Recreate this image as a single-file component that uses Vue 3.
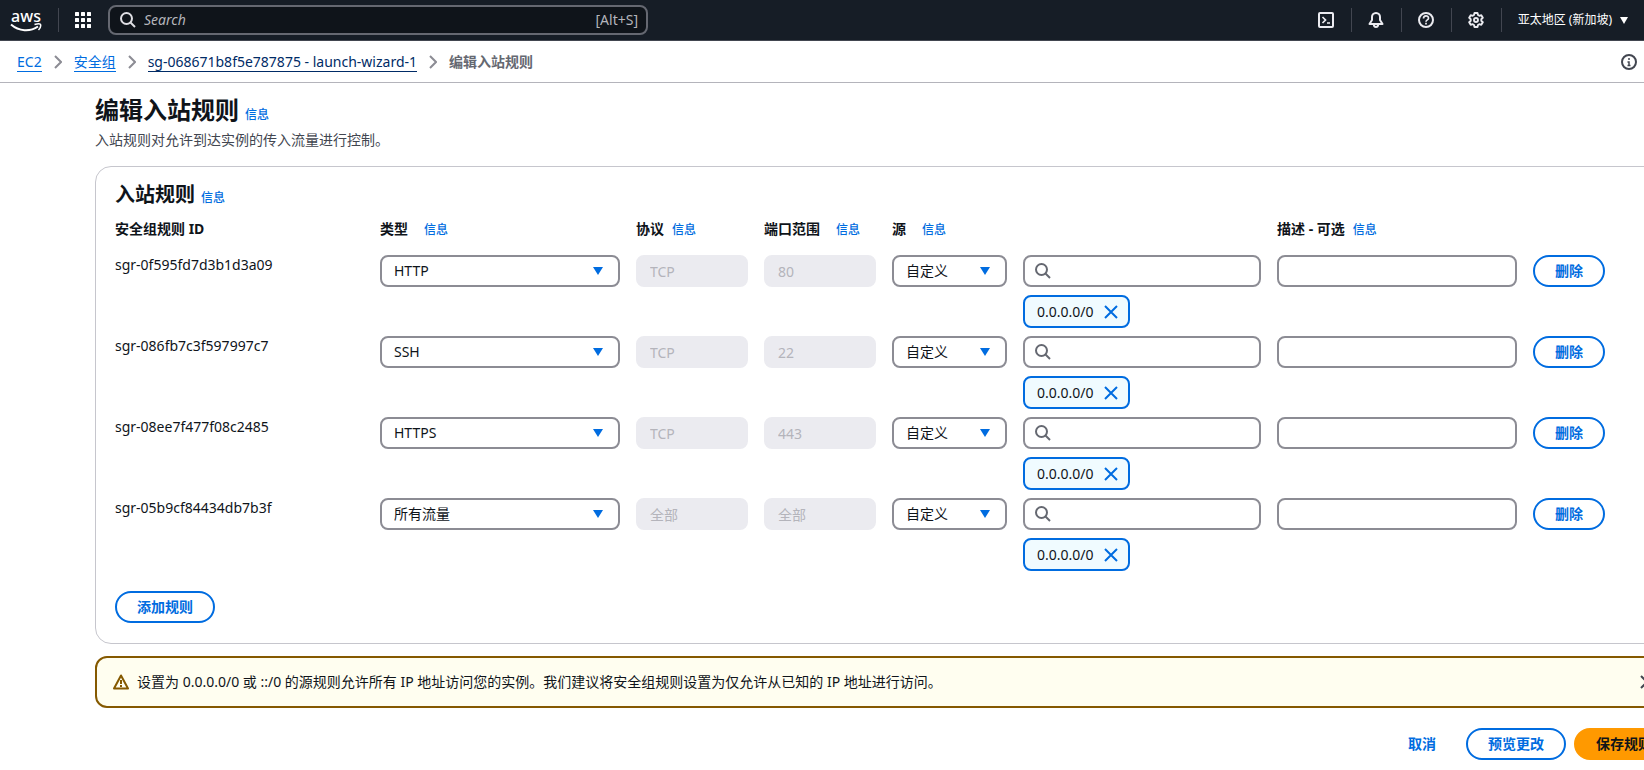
<script setup>
import { ref } from 'vue'

const typeOptions = ['HTTP', 'SSH', 'HTTPS', '所有流量']
const rules = ref([
  { id: 'sgr-0f595fd7d3b1d3a09', type: 'HTTP', protocol: 'TCP', port: '80', source: '自定义', query: '', description: '' },
  { id: 'sgr-086fb7c3f597997c7', type: 'SSH', protocol: 'TCP', port: '22', source: '自定义', query: '', description: '' },
  { id: 'sgr-08ee7f477f08c2485', type: 'HTTPS', protocol: 'TCP', port: '443', source: '自定义', query: '', description: '' },
  { id: 'sgr-05b9cf84434db7b3f', type: '所有流量', protocol: '全部', port: '全部', source: '自定义', query: '', description: '' },
])
const columns = [
  { title: '安全组规则 ID' },
  { title: '类型', info: true, wide: true },
  { title: '协议', info: true },
  { title: '端口范围', info: true, wide: true },
  { title: '源', info: true, wide: true },
  { title: '描述 - 可选', info: true },
]
const removeRule = (index) => rules.value.splice(index, 1)
</script>

<template>
  <div class="page">
    <header class="topbar">
      <a href="#" class="logo" aria-label="aws">
        <span class="logo-text">aws</span>
        <svg class="smile" width="32" height="9" viewBox="0 0 32 9" fill="none" stroke="#fff">
          <path d="M1 1.5C9 8.5 20 9 28 3.5" stroke-width="2" />
          <path d="M24.5 1.5C28 .5 30.5 .5 30.5 1.5C31 3 30 5.500 28.500 7" stroke-width="1.500" />
        </svg>
      </a>
      <span class="divider"></span>
      <button class="icon-button apps" aria-label="服务">
        <svg width="16" height="16" viewBox="0 0 16 16" fill="#fff">
          <template v-for="y in [0, 6, 12]" :key="y">
            <rect v-for="x in [0, 6, 12]" :key="x" :x="x" :y="y" width="4" height="4" rx=".5" />
          </template>
        </svg>
      </button>
      <label class="global-search">
        <svg width="16" height="16" viewBox="0 0 16 16" fill="none" stroke="#dedee3" stroke-width="2">
          <circle cx="6.500" cy="6.500" r="5.500" /><path d="M10.500 10.500L15 15" />
        </svg>
        <input type="text" placeholder="Search" aria-label="Search" />
        <span>[Alt+S]</span>
      </label>
      <nav class="tools">
        <button class="icon-button" aria-label="CloudShell">
          <svg width="16" height="16" viewBox="0 0 16 16" fill="none" stroke="#ebebf0" stroke-width="2">
            <rect x="1" y="1" width="14" height="14" rx="1" /><path d="M4.500 5l3 3-3 3M9 11h3" stroke-width="1.700" />
          </svg>
        </button>
        <button class="icon-button" aria-label="通知">
          <svg width="16" height="16" viewBox="0 0 16 16" fill="none" stroke="#ebebf0" stroke-width="2" stroke-linejoin="round">
            <path d="M8 1C5.500 1 4 3 4 5v3L1.500 12h13L12 8V5C12 3 10.500 1 8 1zM5.800 12c0 4 4.400 4 4.400 0" />
          </svg>
        </button>
        <button class="icon-button" aria-label="支持">
          <svg width="16" height="16" viewBox="0 0 16 16" fill="none" stroke="#ebebf0" stroke-width="2">
            <circle cx="8" cy="8" r="7" /><path d="M5.500 6.500C5.500 3 10.500 3 10.500 6.300C10.500 8 8 7.800 8 9.800M8 10.800v1.800" stroke-width="1.700" />
          </svg>
        </button>
        <button class="icon-button" aria-label="设置">
          <svg width="16" height="16" viewBox="0 0 16 16" fill="none" stroke="#ebebf0" stroke-width="1.900" stroke-linejoin="round">
            <path d="M6.500 1h3l.5 2 1.300.8 2-.6 1.500 2.600L13.300 7.200v1.600l1.500 1.400-1.500 2.600-2-.6L10 13l-.5 2h-3L6 13l-1.300-.8-2 .6-1.500-2.600 1.500-1.400V7.200L1.200 5.800l1.500-2.600 2 .6L6 3z" />
            <circle cx="8" cy="8" r="2" />
          </svg>
        </button>
        <button class="region">
          亚太地区 (新加坡)
          <svg width="8" height="7" viewBox="0 0 8 7" fill="#fff"><path d="M0 0h8L4 7z" /></svg>
        </button>
      </nav>
    </header>

    <nav class="breadcrumbs" aria-label="breadcrumb">
      <a href="#">EC2</a>
      <svg class="chevron" width="8" height="14" viewBox="0 0 8 14"><path d="M1 1l6 6-6 6" /></svg>
      <a href="#">安全组</a>
      <svg class="chevron" width="8" height="14" viewBox="0 0 8 14"><path d="M1 1l6 6-6 6" /></svg>
      <a href="#" class="hovered">sg-068671b8f5e787875 - launch-wizard-1</a>
      <svg class="chevron" width="8" height="14" viewBox="0 0 8 14"><path d="M1 1l6 6-6 6" /></svg>
      <span class="current">编辑入站规则</span>
      <button class="icon-button help" aria-label="信息面板">
        <svg width="16" height="16" viewBox="0 0 16 16" fill="none" stroke="#424650" stroke-width="2">
          <circle cx="8" cy="8" r="7" /><path d="M8 4v2M6.500 8H8v4M6.500 11.500h3" stroke-width="1.500" />
        </svg>
      </button>
    </nav>

    <main>
      <div class="heading">
        <h1>编辑入站规则</h1>
        <a href="#" class="info">信息</a>
      </div>
      <p class="lead">入站规则对允许到达实例的传入流量进行控制。</p>

      <section class="card">
        <div class="heading">
          <h2>入站规则</h2>
          <a href="#" class="info">信息</a>
        </div>
        <table>
          <thead>
            <tr>
              <th v-for="c in columns" :key="c.title" :class="{ wide: c.wide }" scope="col">
                {{ c.title }}<a v-if="c.info" href="#" class="info">信息</a>
              </th>
            </tr>
          </thead>
          <tbody>
            <tr v-for="(r, i) in rules" :key="r.id">
              <td class="rule-id">{{ r.id }}</td>
              <td>
                <div class="select">
                  <select v-model="r.type" aria-label="类型">
                    <option v-for="o in typeOptions" :key="o">{{ o }}</option>
                  </select>
                  <svg width="10" height="8" viewBox="0 0 10 8"><path d="M0 0h10L5 8z" /></svg>
                </div>
              </td>
              <td><input class="field" type="text" :value="r.protocol" disabled aria-label="协议" /></td>
              <td><input class="field" type="text" :value="r.port" disabled aria-label="端口范围" /></td>
              <td class="source">
                <div class="select">
                  <select v-model="r.source" aria-label="源"><option>自定义</option></select>
                  <svg width="10" height="8" viewBox="0 0 10 8"><path d="M0 0h10L5 8z" /></svg>
                </div>
                <div class="cidr">
                  <label class="field search">
                    <svg width="16" height="16" viewBox="0 0 16 16" fill="none" stroke="#656871" stroke-width="2">
                      <circle cx="6.500" cy="6.500" r="5.500" /><path d="M10.500 10.500L15 15" />
                    </svg>
                    <input v-model="r.query" type="text" aria-label="源地址" />
                  </label>
                  <span class="token">
                    0.0.0.0/0
                    <button class="icon-button" aria-label="移除 0.0.0.0/0">
                      <svg width="16" height="16" viewBox="0 0 16 16" stroke="#006ce0" stroke-width="2"><path d="M2 2l12 12M14 2L2 14" /></svg>
                    </button>
                  </span>
                </div>
              </td>
              <td><input v-model="r.description" class="field" type="text" aria-label="描述" /></td>
              <td><button class="button" @click="removeRule(i)">删除</button></td>
            </tr>
          </tbody>
        </table>
        <button class="button add">添加规则</button>
      </section>

      <div class="alert" role="alert">
        <svg width="16" height="16" viewBox="0 0 16 16" fill="none" stroke="#855900" stroke-width="2" stroke-linejoin="round">
          <path d="M8 1.500L15 14.500H1z" /><path d="M8 6v4M8 11v2" />
        </svg>
        <span>设置为 0.0.0.0/0 或 ::/0 的源规则允许所有 IP 地址访问您的实例。我们建议将安全组规则设置为仅允许从已知的 IP 地址进行访问。</span>
        <button class="icon-button" aria-label="关闭">
          <svg width="16" height="16" viewBox="0 0 16 16" stroke="#424650" stroke-width="2"><path d="M2 2l12 12M14 2L2 14" /></svg>
        </button>
      </div>

      <div class="actions">
        <button class="button link">取消</button>
        <button class="button">预览更改</button>
        <button class="button primary">保存规则</button>
      </div>
    </main>
  </div>
</template>

<style>
body {
  background: #fff;
  overflow-x: hidden;
}
</style>

<style scoped>
.page {
  font-family: "Noto Sans", "Noto Sans CJK SC", sans-serif;
  font-size: 14px;
  line-height: 20px;
  color: #0f141a;
  overflow: hidden;
}
.page * {
  box-sizing: border-box;
}
svg {
  display: block;
  flex: none;
}
button,
input,
select {
  font: inherit;
  color: inherit;
  margin: 0;
}
a {
  color: #006ce0;
}
.icon-button {
  display: flex;
  padding: 0;
  border: 0;
  background: none;
}

/* Top bar */
.topbar {
  display: flex;
  align-items: center;
  height: 41px;
  padding-left: 10px;
  background: #161d26;
  border-bottom: 1px solid #424650;
  color: #fff;
}
.logo {
  display: flex;
  flex-direction: column;
  align-items: center;
  width: 32px;
  color: #fff;
  text-decoration: none;
}
.logo-text {
  font-size: 16px;
  font-weight: 500;
  line-height: 14px;
}
.divider {
  width: 1px;
  height: 24px;
  margin-left: 16px;
  background: #424650;
}
.apps {
  margin-left: 16px;
}
.global-search {
  display: flex;
  align-items: center;
  gap: 8px;
  width: 540px;
  height: 30px;
  margin-left: 17px;
  padding: 0 8px 0 10px;
  border: 2px solid #656871;
  border-radius: 8px;
  background: #0f141a;
  color: #b4b4bb;
}
.global-search input {
  flex: 1;
  min-width: 0;
  padding: 0;
  border: 0;
  background: none;
  outline: 0;
}
.global-search input::placeholder {
  color: #b4b4bb;
  font-style: italic;
  opacity: 1;
}
.tools {
  display: flex;
  align-items: center;
  margin-left: auto;
  padding-right: 16px;
}
.tools .icon-button {
  height: 24px;
  align-items: center;
  justify-content: center;
  width: 50px;
  border-right: 1px solid #424650;
}
.region {
  display: flex;
  align-items: center;
  gap: 8px;
  padding: 0 0 0 16px;
  border: 0;
  background: none;
  font-size: 12px;
}

/* Breadcrumbs */
.breadcrumbs {
  display: flex;
  align-items: center;
  gap: 12px;
  height: 42px;
  padding: 1px 7px 0 17px;
  border-bottom: 1px solid #b4b4bb;
}
.breadcrumbs a {
  text-decoration: none;
  border-bottom: 1px solid currentColor;
  line-height: 18px;
}
.breadcrumbs .hovered {
  color: #002b66;
}
.chevron {
  fill: none;
  stroke: #8c8c94;
  stroke-width: 2;
}
.current {
  color: #656871;
  font-weight: 700;
}
.help {
  margin-left: auto;
}

/* Content extends past the right edge of the viewport */
main {
  width: calc(100% + 30px);
  padding: 12px 0 10px 95px;
}
.heading {
  display: flex;
  align-items: baseline;
  gap: 6px;
}
h1,
h2,
p {
  margin: 0;
}
h1 {
  font-size: 24px;
  line-height: 30px;
}
h2 {
  font-size: 20px;
  line-height: 24px;
}
.info {
  font-size: 12px;
  font-weight: 500;
  text-decoration: none;
}
.lead {
  margin-top: 5px;
  color: #424650;
}
.card {
  margin-top: 16px;
  padding: 16px 19px 20px;
  border: 1px solid #c6c6cd;
  border-radius: 16px;
}
table,
thead,
tbody,
th,
td {
  display: block;
  padding: 0;
}
tr {
  display: grid;
  grid-template-columns:
    minmax(0, 249fr) minmax(0, 240fr) minmax(0, 112fr) minmax(0, 112fr)
    minmax(0, 369fr) minmax(0, 240fr) minmax(0, 121fr);
  column-gap: 16px;
}
thead {
  margin: 11px 0 15px;
}
th {
  text-align: left;
  white-space: nowrap;
}
th .info {
  margin-left: 8px;
}
th.wide .info {
  margin-left: 16px;
}
tbody {
  display: grid;
  row-gap: 8px;
}
.field,
select {
  display: block;
  width: 100%;
  height: 32px;
  padding: 0 12px;
  border: 2px solid #8c8c94;
  border-radius: 8px;
  background: #fff;
}
.field:disabled {
  border-color: #ebebf0;
  background: #ebebf0;
  color: #b4b4bb;
}
.select {
  display: grid;
  align-items: center;
}
.select select {
  grid-area: 1 / 1;
  appearance: none;
}
.select svg {
  grid-area: 1 / 1;
  justify-self: end;
  margin-right: 17px;
  fill: #006ce0;
  pointer-events: none;
}
.source {
  display: grid;
  grid-template-columns: minmax(0, 115fr) minmax(0, 238fr);
  column-gap: 16px;
  align-items: start;
}
.cidr {
  display: grid;
  grid-template-columns: minmax(0, 1fr);
  row-gap: 8px;
  justify-items: start;
}
.search {
  display: flex;
  align-items: center;
  gap: 8px;
  padding: 0 10px;
}
.search input {
  flex: 1;
  min-width: 0;
  border: 0;
  outline: 0;
}
.token {
  display: flex;
  align-items: center;
  gap: 9px;
  height: 33px;
  padding: 0 9px 0 12px;
  border: 2px solid #006ce0;
  border-radius: 8px;
  background: #f0fbff;
}
.button {
  height: 32px;
  padding: 0 20px;
  border: 2px solid #006ce0;
  border-radius: 16px;
  background: #fff;
  color: #006ce0;
  font-weight: 700;
  white-space: nowrap;
}
.add {
  margin-top: 20px;
}
.alert {
  display: flex;
  align-items: center;
  gap: 8px;
  height: 52px;
  margin-top: 12px;
  padding: 0 17px 0 16px;
  border: 2px solid #855900;
  border-radius: 12px;
  background: #fffef0;
}
.alert .icon-button {
  margin-left: auto;
}
.actions {
  display: flex;
  justify-content: flex-end;
  gap: 8px;
  margin-top: 20px;
}
.link {
  border-color: transparent;
}
.primary {
  border-color: #ff9900;
  background: #ff9900;
  color: #0f141a;
}
</style>
